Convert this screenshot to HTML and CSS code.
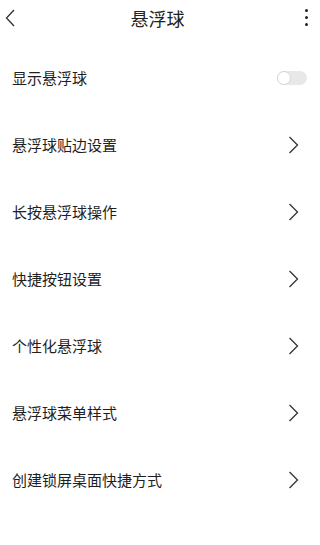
FILE: index.html
```html
<!DOCTYPE html>
<html lang="zh-CN">
<head>
    <meta charset="UTF-8">
    <meta name="viewport" content="width=device-width, initial-scale=1.0">
    <title>悬浮球</title>
    <link rel="stylesheet" href="styles.css">
</head>
<body>
    <div class="page">
        <header class="top-bar">
            <button class="icon-btn back-btn" aria-label="返回">
                <svg width="10" height="18" viewBox="0 0 10 18">
                    <path d="M9 1 L1.5 9 L9 17" fill="none" stroke="#333" stroke-width="1.3"/>
                </svg>
            </button>
            <h1 class="title">悬浮球</h1>
            <button class="icon-btn more-btn" aria-label="更多">
                <span class="dot"></span>
                <span class="dot"></span>
                <span class="dot"></span>
            </button>
        </header>

        <ul class="settings">
            <li class="setting-row">
                <span class="label">显示悬浮球</span>
                <span class="switch"><span class="knob"></span></span>
            </li>
            <li class="setting-row">
                <span class="label">悬浮球贴边设置</span>
                <svg class="chevron" width="11" height="18" viewBox="0 0 11 18">
                    <path d="M1.5 1 L9.5 9 L1.5 17" fill="none" stroke="#333" stroke-width="1.3"/>
                </svg>
            </li>
            <li class="setting-row">
                <span class="label">长按悬浮球操作</span>
                <svg class="chevron" width="11" height="18" viewBox="0 0 11 18">
                    <path d="M1.5 1 L9.5 9 L1.5 17" fill="none" stroke="#333" stroke-width="1.3"/>
                </svg>
            </li>
            <li class="setting-row">
                <span class="label">快捷按钮设置</span>
                <svg class="chevron" width="11" height="18" viewBox="0 0 11 18">
                    <path d="M1.5 1 L9.5 9 L1.5 17" fill="none" stroke="#333" stroke-width="1.3"/>
                </svg>
            </li>
            <li class="setting-row">
                <span class="label">个性化悬浮球</span>
                <svg class="chevron" width="11" height="18" viewBox="0 0 11 18">
                    <path d="M1.5 1 L9.5 9 L1.5 17" fill="none" stroke="#333" stroke-width="1.3"/>
                </svg>
            </li>
            <li class="setting-row">
                <span class="label">悬浮球菜单样式</span>
                <svg class="chevron" width="11" height="18" viewBox="0 0 11 18">
                    <path d="M1.5 1 L9.5 9 L1.5 17" fill="none" stroke="#333" stroke-width="1.3"/>
                </svg>
            </li>
            <li class="setting-row">
                <span class="label">创建锁屏桌面快捷方式</span>
                <svg class="chevron" width="11" height="18" viewBox="0 0 11 18">
                    <path d="M1.5 1 L9.5 9 L1.5 17" fill="none" stroke="#333" stroke-width="1.3"/>
                </svg>
            </li>
        </ul>
    </div>
</body>
</html>
```

FILE: styles.css
```css
* {
    margin: 0;
    padding: 0;
    box-sizing: border-box;
}

body {
    background: #ffffff;
    font-family: "Noto Sans CJK SC", "Noto Sans", sans-serif;
    color: #222222;
}

.page {
    width: 100%;
    min-height: 100vh;
    background: #ffffff;
}

.top-bar {
    height: 35px;
    display: flex;
    align-items: center;
    justify-content: space-between;
    padding: 0 10px 0 5px;
}

.icon-btn {
    background: none;
    border: none;
    width: 20px;
    height: 20px;
    display: flex;
    align-items: center;
    justify-content: center;
}

.back-btn {
    justify-content: flex-start;
}

.more-btn {
    flex-direction: column;
    gap: 4px;
    align-items: flex-end;
    padding-right: 2px;
}

.dot {
    width: 3px;
    height: 3px;
    border-radius: 50%;
    background: #222222;
}

.title {
    font-size: 18px;
    font-weight: 400;
    color: #222222;
    line-height: 1;
}

.settings {
    list-style: none;
    margin-top: 9px;
}

.setting-row {
    height: 67px;
    display: flex;
    align-items: center;
    justify-content: space-between;
    padding: 0 21px 0 12px;
}

.label {
    font-size: 15px;
    line-height: 1;
    color: #1f1f1f;
}

.switch {
    width: 30px;
    height: 14px;
    border-radius: 7px;
    background: #e8e8e8;
    position: relative;
    margin-right: -8px;
}

.knob {
    position: absolute;
    left: 0;
    top: 0;
    width: 14px;
    height: 14px;
    border-radius: 50%;
    background: #ffffff;
    border: 1px solid #d6d6d6;
}
```
